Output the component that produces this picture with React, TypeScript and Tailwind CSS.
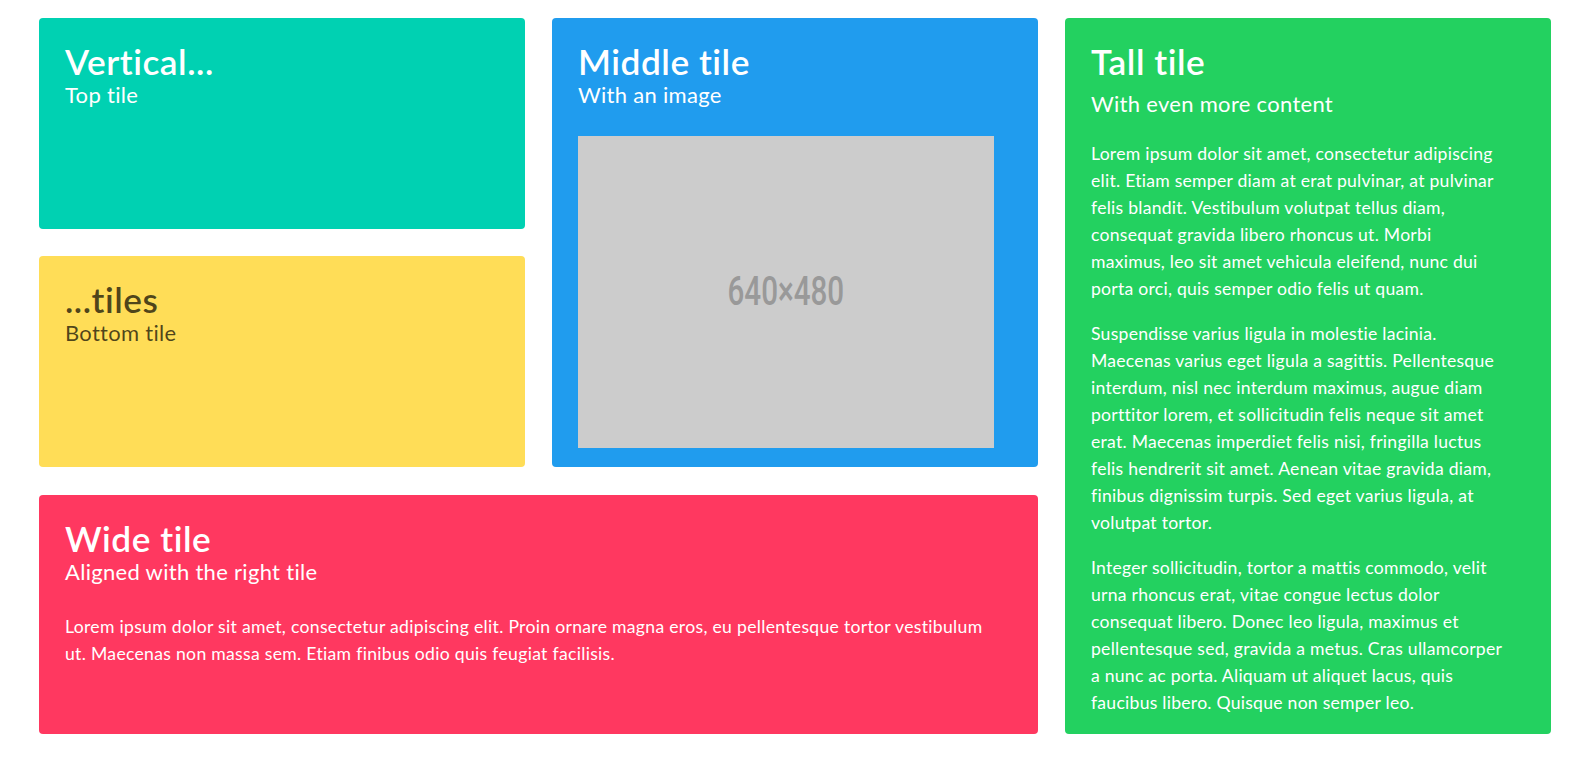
const font = { fontFamily: '"Lato", "Open Sans", sans-serif' };

type TileProps = {
  color: string;
  title: string;
  subtitle: string;
  dark?: boolean;
  className?: string;
  children?: React.ReactNode;
};

function Tile({ color, title, subtitle, dark = false, className = "", children }: TileProps) {
  return (
    <article
      className={`rounded-[4px] pt-[22px] pr-[44px] pb-[22px] pl-[26px] ${color} ${
        dark ? "text-black/70" : "text-white"
      } ${className}`}
    >
      <p className="mt-[2px] text-[35.2px] leading-[1.125] font-semibold tracking-[0.55px]">{title}</p>
      <p className="mt-[-1px] text-[22px] leading-[1.25] tracking-[0.3px]">{subtitle}</p>
      {children}
    </article>
  );
}

export default function App() {
  return (
    <div className="min-h-[760px] bg-white pt-[18px]" style={font}>
      <div className="ml-[39px] flex w-[1512px] gap-[27px]">
        <div className="flex w-[999px] flex-col gap-[28px]">
          <div className="flex h-[449px] gap-[27px]">
            <div className="flex w-[486px] flex-col gap-[27px]">
              <Tile color="bg-[#00d1b2]" title="Vertical..." subtitle="Top tile" className="flex-1" />
              <Tile color="bg-[#ffdd57]" title="...tiles" subtitle="Bottom tile" dark className="flex-1" />
            </div>
            <Tile color="bg-[#209cee]" title="Middle tile" subtitle="With an image" className="w-[486px]">
              <div className="mt-[28px] flex aspect-[4/3] w-full items-center justify-center bg-[#cccccc]">
                <span
                  className="scale-x-[0.74] text-[40px] leading-none font-medium text-[#999999]"
                  style={{ fontFamily: '"Roboto", sans-serif' }}
                >
                  640×480
                </span>
              </div>
            </Tile>
          </div>
          <Tile
            color="bg-[#ff3860]"
            title="Wide tile"
            subtitle="Aligned with the right tile"
            className="h-[239px]"
          >
            <p className="mt-[28px] text-[17.6px] leading-[27px] tracking-[0.3px]">
              Lorem ipsum dolor sit amet, consectetur adipiscing elit. Proin ornare magna eros, eu
              pellentesque tortor vestibulum ut. Maecenas non massa sem. Etiam finibus odio quis
              feugiat facilisis.
            </p>
          </Tile>
        </div>
        <article className="h-[716px] w-[486px] rounded-[4px] bg-[#23d160] pt-[22px] pr-[44px] pb-[22px] pl-[26px] text-white">
          <p className="mt-[2px] text-[35.2px] leading-[1.125] font-semibold tracking-[0.55px]">Tall tile</p>
          <p className="mt-[8px] text-[22px] leading-[1.25] tracking-[0.3px]">With even more content</p>
          <div className="mt-[23px] flex flex-col gap-[18px] text-[17.6px] leading-[27px] tracking-[0.25px]">
            <p>
              Lorem ipsum dolor sit amet, consectetur adipiscing elit. Etiam semper diam at erat
              pulvinar, at pulvinar felis blandit. Vestibulum volutpat tellus diam, consequat gravida
              libero rhoncus ut. Morbi maximus, leo sit amet vehicula eleifend, nunc dui porta orci,
              quis semper odio felis ut quam.
            </p>
            <p>
              Suspendisse varius ligula in molestie lacinia. Maecenas varius eget ligula a sagittis.
              Pellentesque interdum, nisl nec interdum maximus, augue diam porttitor lorem, et
              sollicitudin felis neque sit amet erat. Maecenas imperdiet felis nisi, fringilla luctus
              felis hendrerit sit amet. Aenean vitae gravida diam, finibus dignissim turpis. Sed eget
              varius ligula, at volutpat tortor.
            </p>
            <p>
              Integer sollicitudin, tortor a mattis commodo, velit urna rhoncus erat, vitae congue
              lectus dolor consequat libero. Donec leo ligula, maximus et pellentesque sed, gravida a
              metus. Cras ullamcorper a nunc ac porta. Aliquam ut aliquet lacus, quis faucibus libero.
              Quisque non semper leo.
            </p>
          </div>
        </article>
      </div>
    </div>
  );
}
